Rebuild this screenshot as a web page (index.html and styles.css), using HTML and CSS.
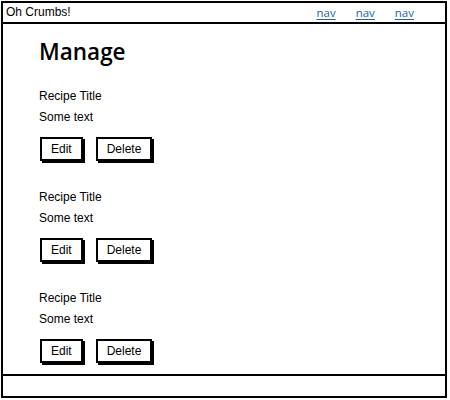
FILE: index.html
```html
<!DOCTYPE html>
<html>
<head>
<meta charset="utf-8">
<link rel="stylesheet" href="styles.css">
</head>
<body>
<div class="frame">
  <header class="topbar">
    <span class="brand">Oh Crumbs!</span>
    <nav class="nav">
      <a href="#">nav</a>
      <a href="#">nav</a>
      <a href="#">nav</a>
    </nav>
  </header>
  <main class="content">
    <h1 class="title">Manage</h1>
    <section class="recipe">
      <div class="recipe-title">Recipe Title</div>
      <div class="recipe-text">Some text</div>
      <div class="actions"><button class="btn">Edit</button><button class="btn">Delete</button></div>
    </section>
    <section class="recipe">
      <div class="recipe-title">Recipe Title</div>
      <div class="recipe-text">Some text</div>
      <div class="actions"><button class="btn">Edit</button><button class="btn">Delete</button></div>
    </section>
    <section class="recipe">
      <div class="recipe-title">Recipe Title</div>
      <div class="recipe-text">Some text</div>
      <div class="actions"><button class="btn">Edit</button><button class="btn">Delete</button></div>
    </section>
  </main>
  <footer class="footer"></footer>
</div>
</body>
</html>
```

FILE: styles.css
```css
* { box-sizing: border-box; }
html, body { margin: 0; padding: 0; background: #fff; }
body {
  font-family: "Liberation Sans", Arial, sans-serif;
  font-size: 12px;
  color: #000;
}
.frame {
  margin: 1px 0 0 1px;
  width: 446px;
  height: 397px;
  border: 2px solid #000;
  display: flex;
  flex-direction: column;
}
.topbar {
  height: 21px;
  border-bottom: 2px solid #000;
  display: flex;
  align-items: flex-start;
  justify-content: space-between;
  padding: 0 31px 0 3px;
  line-height: 19px;
}
.brand { font-size: 12px; }
.nav {
  display: flex;
  gap: 20px;
  padding-top: 0;
}
.nav a {
  color: #2a60a0;
  text-decoration: underline;
  text-underline-offset: 2px;
  font-family: "Open Sans", sans-serif;
  font-weight: 500;
  font-size: 11.5px;
}
.content {
  flex: 1;
  padding-left: 36px;
}
.title {
  margin: 15px 0 0 0;
  font-family: "Open Sans", sans-serif;
  font-weight: 600;
  font-size: 22.5px;
  line-height: 26px;
}
.recipe { margin-top: 23px; }
.recipe + .recipe { margin-top: 28px; }
.recipe-title, .recipe-text { line-height: 16px; }
.recipe-text { margin-top: 5px; }
.actions {
  margin-top: 12px;
  display: flex;
  gap: 13px;
  padding-left: 1px;
}
.btn {
  height: 24px;
  padding: 0 9px;
  border: 2px solid #000;
  background: #fff;
  box-shadow: 2px 2px 0 #000;
  font-family: "Liberation Sans", Arial, sans-serif;
  font-size: 12px;
  color: #000;
  line-height: 18px;
}
.footer {
  height: 22px;
  border-top: 2px solid #000;
}
```
